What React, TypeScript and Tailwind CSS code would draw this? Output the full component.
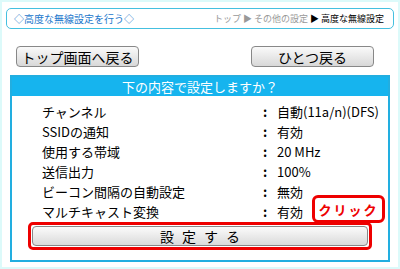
import React from "react";

const font = { fontFamily: '"Noto Sans CJK JP", "Noto Sans", sans-serif' };

const rows: [string, string][] = [
  ["チャンネル", "自動(11a/n)(DFS)"],
  ["SSIDの通知", "有効"],
  ["使用する帯域", "20 MHz"],
  ["送信出力", "100%"],
  ["ビーコン間隔の自動設定", "無効"],
  ["マルチキャスト変換", "有効"],
];

export default function App() {
  return (
    <div
      className="w-[400px] h-[269px] bg-white border-2 border-[#dcfafa] box-border flex flex-col overflow-hidden relative"
      style={font}
    >
      <div className="mx-[4px] mt-[6px] h-[21px] rounded-[5px] border border-[#45c0e0] flex items-center justify-between pl-[7px] pr-[9px]">
        <span className="text-[10px] text-[#2277cc] leading-none">◇高度な無線設定を行う◇</span>
        <span className="text-[9px] leading-none text-[#999]">
          トップ ▶ その他の設定 <span className="text-black">▶ 高度な無線設定</span>
        </span>
      </div>
      <div className="flex justify-between mt-[17px] pl-[14px] pr-[24px]">
        <button className="w-[123px] h-[21px] rounded-[4px] border border-[#888] bg-gradient-to-b from-[#fafafa] to-[#d8d8d8] text-[14px] leading-none text-black flex items-center justify-center">
          トップ画面へ戻る
        </button>
        <button className="w-[123px] h-[21px] rounded-[4px] border border-[#888] bg-gradient-to-b from-[#fafafa] to-[#d8d8d8] text-[14px] leading-none text-black flex items-center justify-center">
          ひとつ戻る
        </button>
      </div>
      <div className="mx-[8px] mt-[8px] h-[187px] border-2 border-[#22aee0] flex flex-col">
        <div className="h-[19px] bg-[#16b4ee] text-white text-[13px] leading-none flex items-center justify-center">
          下の内容で設定しますか？
        </div>
        <div className="flex flex-col pt-[5px] text-[13px] text-black leading-none">
          {rows.map(([k, v]) => (
            <div key={k} className="h-[20px] flex items-center">
              <span className="w-[251px] pl-[30px]">{k}</span>
              <span className="w-[14px] font-bold">:</span>
              <span>{v}</span>
            </div>
          ))}
        </div>
        <div className="mt-[1px] mx-[16px] h-[28px] rounded-[5px] border-[3px] border-[#ee0000] p-[1px] flex">
          <button className="flex-1 rounded-[4px] border border-[#888] bg-gradient-to-b from-[#fbfbfb] to-[#dadada] text-[14px] leading-none text-black tracking-[8px] pl-[8px] flex items-center justify-center">
            設定する
          </button>
        </div>
      </div>
      <div className="absolute left-[310px] top-[193px] w-[73px] h-[28px] rounded-[6px] border-[3px] border-[#ee0000] bg-white flex items-center justify-center text-[13px] font-bold text-[#ee0000] tracking-[2px] leading-none">
        クリック
      </div>
    </div>
  );
}
